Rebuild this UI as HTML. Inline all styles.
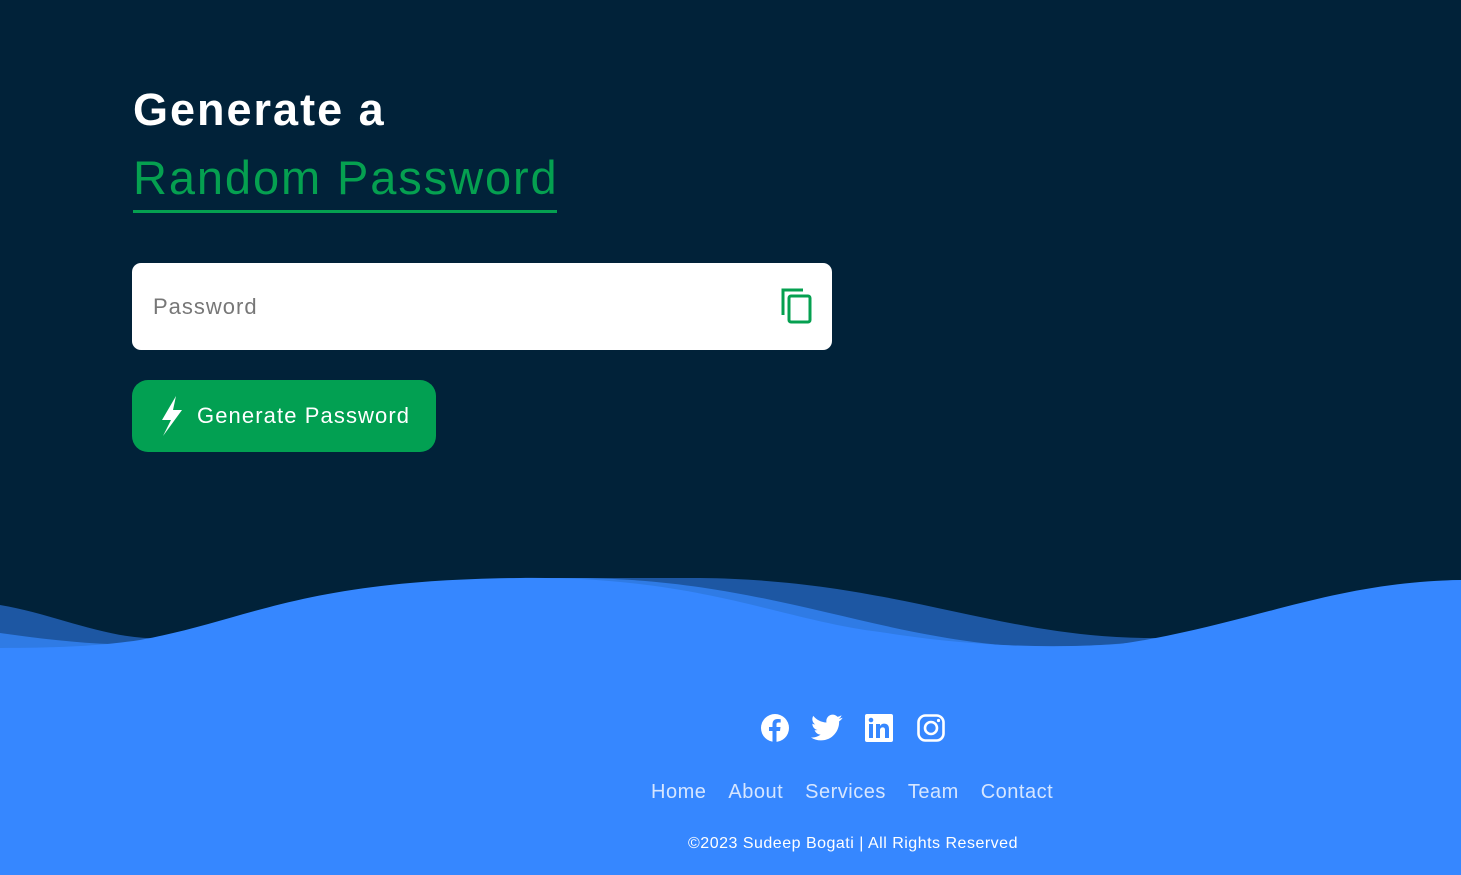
<!DOCTYPE html>
<html><head><meta charset="utf-8"><style>
*{margin:0;padding:0;box-sizing:border-box}
body{width:1461px;height:875px;background:#012239;font-family:"Liberation Sans",sans-serif;position:relative;overflow:hidden}
.h1{position:absolute;left:133px;top:84px;color:#fff;font-size:45px;font-weight:bold;letter-spacing:2px}
.h2{position:absolute;left:133px;top:150px;color:#05a050;font-size:47px;letter-spacing:1.9px;padding-bottom:5px;border-bottom:3px solid #05a050;width:424px;white-space:nowrap}
.inp{position:absolute;left:132px;top:263px;width:700px;height:87px;background:#fff;border-radius:9px}
.inp span{position:absolute;left:21px;top:31px;font-size:22px;color:#777;letter-spacing:1px}
.btn{position:absolute;left:132px;top:380px;width:304px;height:72px;background:#02a052;border-radius:16px;color:#fff;font-size:22px}
.btn span{position:absolute;left:65px;top:23px;letter-spacing:1.1px}
.foot{position:absolute;left:0;top:640px;width:1461px;height:235px;background:#3687ff}
.nav{position:absolute;top:781px;left:651px;color:#d6e6ff;font-size:20px;letter-spacing:0.5px;white-space:nowrap}
.nav span{margin-right:22px}
.copy{position:absolute;top:835px;left:688px;color:#fff;font-size:16px;letter-spacing:0.5px}
</style></head><body>
<div class="h1">Generate a</div>
<div class="h2">Random Password</div>
<div class="inp"><span>Password</span>
<svg style="position:absolute;left:648px;top:24px" width="34" height="38" viewBox="0 0 34 38"><path d="M3 28V3h20" fill="none" stroke="#05a050" stroke-width="3"/><rect x="9" y="9" width="21" height="26" rx="2" fill="none" stroke="#05a050" stroke-width="3"/></svg></div>
<div class="btn"><svg style="position:absolute;left:27px;top:15px" width="26" height="42" viewBox="0 0 26 42"><path d="M17 1L3 25h9L4 41 23 15h-9z" fill="#fff"/></svg><span>Generate Password</span></div>
<div class="foot"></div>
<svg style="position:absolute;left:0;top:570px" width="1461" height="80" viewBox="0 0 1461 80">
<path d="M0 35C60 45 110 72 170 68 300 60 350 10 520 8L700 8C900 10 1000 70 1160 68 1300 60 1350 12 1461 10V80H0z" fill="#1d57a3"/>
<path d="M0 63C50 70 100 76 150 74 300 62 350 10 560 8 750 6 850 60 1000 75 1100 80 1200 74 1461 12V80H0z" fill="#2f7be5"/>
<path d="M0 78C60 78 100 76 140 70 250 50 300 10 520 8 700 6 780 50 880 62 980 78 1060 78 1120 74 1250 55 1330 12 1461 10V80H0z" fill="#3687ff"/>
</svg>
<svg style="position:absolute;left:760px;top:713px" width="30" height="30" viewBox="0 0 30 30"><circle cx="15" cy="15" r="14" fill="#fff"/><path d="M16.5 29V18h3.5l.5-4h-4v-2.5c0-1.2.4-2 2-2h2.2V6.2c-.4 0-1.7-.2-3.2-.2-3.2 0-5 1.9-5 5.3V14H9v4h3.5v11z" fill="#3687ff"/></svg>
<svg style="position:absolute;left:811px;top:714px" width="32" height="28" viewBox="0 0 24 20"><path d="M23.6 2.3c-.9.4-1.8.6-2.8.8 1-.6 1.8-1.5 2.1-2.7-.9.6-2 1-3.1 1.2C19 .6 17.7 0 16.3 0c-2.7 0-4.8 2.2-4.8 4.8 0 .4 0 .8.1 1.1C7.6 5.7 4 3.8 1.7.9c-.4.7-.7 1.6-.7 2.4 0 1.7.9 3.2 2.2 4-.8 0-1.5-.2-2.2-.6v.1c0 2.3 1.7 4.3 3.9 4.7-.4.1-.8.2-1.3.2-.3 0-.6 0-.9-.1.6 1.9 2.4 3.3 4.5 3.4-1.7 1.3-3.7 2.1-6 2.1H0c2.1 1.4 4.7 2.2 7.4 2.2 8.9 0 13.7-7.4 13.7-13.7v-.6c1-.7 1.8-1.5 2.5-2.5z" fill="#fff"/></svg>
<svg style="position:absolute;left:865px;top:714px" width="28" height="28" viewBox="0 0 28 28"><rect width="28" height="28" rx="2" fill="#fff"/><rect x="4" y="10" width="4" height="14" fill="#3687ff"/><circle cx="6" cy="6" r="2.3" fill="#3687ff"/><path d="M11 10h4v2c.8-1.4 2.3-2.4 4.2-2.4 3 0 4.8 1.8 4.8 5.4V24h-4v-8c0-1.7-.7-2.6-2.2-2.6-1.6 0-2.8 1-2.8 2.8V24h-4z" fill="#3687ff"/></svg>
<svg style="position:absolute;left:917px;top:714px" width="28" height="28" viewBox="0 0 28 28"><rect x="1.5" y="1.5" width="25" height="25" rx="7" fill="none" stroke="#fff" stroke-width="2.6"/><circle cx="14" cy="14" r="6" fill="none" stroke="#fff" stroke-width="2.6"/><circle cx="21.5" cy="6.5" r="1.6" fill="#fff"/></svg>
<div class="nav"><span>Home</span><span>About</span><span>Services</span><span>Team</span><span>Contact</span></div>
<div class="copy">©2023 Sudeep Bogati | All Rights Reserved</div>
</body></html>
